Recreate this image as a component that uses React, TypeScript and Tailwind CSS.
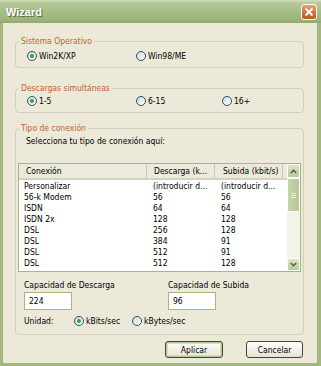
import React from "react";

const Radio = ({ checked }: { checked?: boolean }) => (
  <span className="w-[10px] h-[10px] rounded-full border border-[#1c5180] bg-linear-to-br from-[#d8d6cb] to-white flex items-center justify-center shrink-0">
    {checked && <span className="w-[4px] h-[4px] rounded-full bg-[#3f9a2e]" />}
  </span>
);

const RadioItem = ({ label, checked, w }: { label: string; checked?: boolean; w: string }) => (
  <div className={`flex items-center gap-[2px] ${w}`}>
    <Radio checked={checked} />
    <span>{label}</span>
  </div>
);

const rows = [
  ["Personalizar", "(introducir d...", "(introducir d..."],
  ["56-k Modem", "56", "56"],
  ["ISDN", "64", "64"],
  ["ISDN 2x", "128", "128"],
  ["DSL", "256", "128"],
  ["DSL", "384", "91"],
  ["DSL", "512", "91"],
  ["DSL", "512", "128"],
];

const Chevron = ({ up }: { up?: boolean }) => (
  <svg width="7" height="5" viewBox="0 0 7 5">
    <path
      d={up ? "M0.8 4 L3.5 1.3 L6.2 4" : "M0.8 1 L3.5 3.7 L6.2 1"}
      fill="none"
      stroke="#4d6136"
      strokeWidth="1.4"
    />
  </svg>
);

export default function App() {
  return (
    <div className="w-[321px] h-[366px] flex flex-col bg-[#a3b77f] font-['DejaVu_Sans_Condensed','DejaVu_Sans',sans-serif] text-[8.5px] leading-[12px] text-black">
      {/* Title bar */}
      <div className="h-[23px] shrink-0 flex items-center justify-between pl-[6px] pr-[4px] bg-[linear-gradient(to_bottom,#d5e0ba_0%,#b4c897_14%,#a7bd86_50%,#9eb47c_85%,#93a970_100%)]">
        <span className="font-['Liberation_Sans',sans-serif] font-bold text-[11px] text-white [text-shadow:1px_1px_0_#5d6d45]">
          Wizard
        </span>
        <div className="w-[16px] h-[16px] rounded-[3px] border border-white bg-[linear-gradient(to_bottom,#e7a470,#c9703a_60%,#b45d28)] flex items-center justify-center">
          <svg width="10" height="10" viewBox="0 0 10 10">
            <path d="M1.5 1.5 L8.5 8.5 M8.5 1.5 L1.5 8.5" stroke="white" strokeWidth="1.8" />
          </svg>
        </div>
      </div>

      {/* Body */}
      <div className="flex-1 ml-[3px] mr-[4px] mb-[3px] bg-[#ece9d8] pl-[12px] pr-[13px] pt-[12px] flex flex-col">
        {/* Group 1 */}
        <fieldset className="border border-[#d0d0bf] rounded-[4px] pb-[5px]">
          <legend className="ml-[3px] px-[2px] text-[#c0652a]">Sistema Operativo</legend>
          <div className="flex items-center pl-[11px] mt-[3px] h-[12px]">
            <RadioItem label="Win2K/XP" checked w="w-[109px]" />
            <RadioItem label="Win98/ME" w="w-[100px]" />
          </div>
        </fieldset>

        {/* Group 2 */}
        <fieldset className="border border-[#d0d0bf] rounded-[4px] pb-[5px] mt-[14px]">
          <legend className="ml-[3px] px-[2px] text-[#c0652a]">Descargas simultáneas</legend>
          <div className="flex items-center pl-[11px] mt-[1px] h-[12px]">
            <RadioItem label="1-5" checked w="w-[109px]" />
            <RadioItem label="6-15" w="w-[86px]" />
            <RadioItem label="16+" w="w-[60px]" />
          </div>
        </fieldset>

        {/* Group 3 */}
        <fieldset className="border border-[#d0d0bf] rounded-[4px] pb-[7px] mt-[9px] px-[2px]">
          <legend className="ml-[1px] px-[2px] text-[#c0652a]">Tipo de conexión</legend>
          <div className="pl-[8px] mt-[1px]">Selecciona tu tipo de conexión aquí:</div>

          {/* List */}
          <div className="mt-[16px] h-[109px] border border-[#a5b97e] bg-white flex">
            <div className="flex-1 flex flex-col">
              <div className="h-[16px] flex bg-[#ebeadb] border-b-[2px] border-[#d6d2c2]">
                <div className="w-[128px] pl-[7px] flex items-center border-r border-[#cbc7b8]">Conexión</div>
                <div className="w-[68px] pl-[7px] flex items-center border-r border-[#cbc7b8]">Descarga (k...</div>
                <div className="w-[68px] pl-[8px] flex items-center border-r border-[#cbc7b8]">Subida (kbit/s)</div>
                <div className="flex-1" />
              </div>
              <div className="pt-[1px]">
                {rows.map((r, i) => (
                  <div key={i} className="h-[11px] flex items-center leading-[11px]">
                    <div className="w-[128px] pl-[5px]">{r[0]}</div>
                    <div className="w-[68px] pl-[6px]">{r[1]}</div>
                    <div className="w-[68px] pl-[6px]">{r[2]}</div>
                  </div>
                ))}
              </div>
            </div>
            {/* Scrollbar */}
            <div className="w-[13px] flex flex-col bg-[#f4f3ea]">
              <div className="h-[14px] rounded-[2px] border border-white bg-linear-to-b from-[#dbe5c5] to-[#b9cb9b] flex items-center justify-center">
                <Chevron up />
              </div>
              <div className="h-[34px] rounded-[2px] border border-white bg-linear-to-r from-[#c6d5ab] to-[#b3c695] flex flex-col items-center justify-center gap-[1px]">
                <div className="w-[5px] h-[1px] bg-[#e8efda]" />
                <div className="w-[5px] h-[1px] bg-[#e8efda]" />
                <div className="w-[5px] h-[1px] bg-[#e8efda]" />
              </div>
              <div className="flex-1" />
              <div className="h-[13px] rounded-[2px] border border-white bg-linear-to-b from-[#dbe5c5] to-[#b9cb9b] flex items-center justify-center">
                <Chevron />
              </div>
            </div>
          </div>

          {/* Capacities */}
          <div className="flex mt-[7px] pl-[6px]">
            <div className="w-[144px]">
              <div>Capacidad de Descarga</div>
              <div className="mt-[1px] w-[48px] h-[18px] border border-[#a5b97e] bg-white pl-[4px] flex items-center">224</div>
            </div>
            <div>
              <div>Capacidad de Subida</div>
              <div className="mt-[1px] w-[48px] h-[18px] border border-[#a5b97e] bg-white pl-[4px] flex items-center">96</div>
            </div>
          </div>

          <div className="flex items-center mt-[5px] pl-[6px] h-[12px]">
            <div className="w-[50px]">Unidad:</div>
            <RadioItem label="kBits/sec" checked w="w-[58px]" />
            <RadioItem label="kBytes/sec" w="w-[70px]" />
          </div>
        </fieldset>

        {/* Buttons */}
        <div className="flex justify-end gap-[23px] mt-[6px] pr-[1px]">
          <button className="w-[58px] h-[17px] rounded-[3px] border border-[#3c4a2e] bg-linear-to-b from-white to-[#e6e3d3] shadow-[inset_0_0_0_1px_#b5c98f,inset_0_0_0_2px_#d2dfb8] flex items-center justify-center">
            Aplicar
          </button>
          <button className="w-[57px] h-[17px] rounded-[3px] border border-[#3c4a2e] bg-linear-to-b from-white to-[#e6e3d3] flex items-center justify-center">
            Cancelar
          </button>
        </div>
      </div>
    </div>
  );
}
